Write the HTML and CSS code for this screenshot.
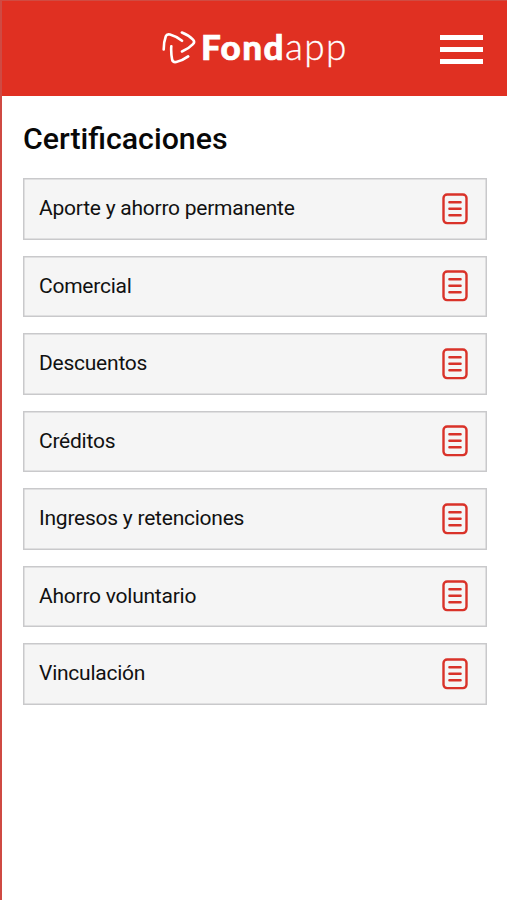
FILE: index.html
```html
<!DOCTYPE html>
<html lang="es">
<head>
<meta charset="utf-8">
<title>Fondapp</title>
<link rel="stylesheet" href="styles.css">
</head>
<body>
<svg class="defs" width="0" height="0" aria-hidden="true">
<symbol id="doc" viewBox="0 0 26 32"><rect x="1.5" y="1.5" width="23" height="28.6" rx="3.6"/><path d="M7.4 9.3h11.2M7.4 15.8h11.2M7.4 22.3h11.2"/></symbol>
</svg>
<div class="screen">
<header class="bar">
<div class="brand">
<svg class="mark" width="36" height="36" viewBox="0 0 36 36"><path d="M2.7 19.5Q2.8 11.5 4.8 6.2Q5.8 3.8 9 4.6Q15 6.2 21 10.8M20.9 2.5Q28 5.4 32 9.6Q34.2 11.9 32 14.1Q27.5 18.8 21 21.5M10.3 16.2Q9.8 23 11.2 29.9Q11.9 32.5 15.2 32Q21.5 30.6 27.2 26.4"/></svg>
<div class="wordmark"><b>Fond</b><span>app</span></div>
</div>
<button class="menu" aria-label="Menú"><i></i><i></i><i></i></button>
</header>
<main>
<h1>Certificaciones</h1>
<ul>
<li><span>Aporte y ahorro permanente</span><svg class="doc"><use href="#doc"/></svg></li>
<li><span>Comercial</span><svg class="doc"><use href="#doc"/></svg></li>
<li><span>Descuentos</span><svg class="doc"><use href="#doc"/></svg></li>
<li><span>Créditos</span><svg class="doc"><use href="#doc"/></svg></li>
<li><span>Ingresos y retenciones</span><svg class="doc"><use href="#doc"/></svg></li>
<li><span>Ahorro voluntario</span><svg class="doc"><use href="#doc"/></svg></li>
<li><span>Vinculación</span><svg class="doc"><use href="#doc"/></svg></li>
</ul>
</main>
</div>
</body>
</html>
```
FILE: styles.css
```css
* { box-sizing: border-box; }
body { margin: 0; background: #fff; font-family: Roboto, sans-serif; color: #111; }
.defs { position: absolute; }
.screen { height: 900px; border-left: 2px solid #cf4a43; overflow: hidden; }
.bar { height: 96px; background: #e03022; border-top: 1px solid #d04b42; display: flex; align-items: center; justify-content: space-between; padding: 0 24px 0 159px; }
.brand { display: flex; align-items: center; margin-top: -2px; }
.mark { fill: none; stroke: #fff; stroke-width: 2.6; stroke-linecap: round; stroke-linejoin: round; }
.wordmark { font: 35px/40px Lato, sans-serif; color: #fff; margin: -4px 0 0 4px; display: flex; align-items: baseline; }
.wordmark b { font-weight: 900; letter-spacing: 1.4px; -webkit-text-stroke: .7px #fff; }
.wordmark span { font-weight: 300; font-size: 37px; letter-spacing: 1.4px; -webkit-text-stroke: .3px #fff; }
.menu { border: 0; padding: 0; background: none; width: 43px; display: flex; flex-direction: column; gap: 7px; margin-top: 1px; }
.menu i { height: 5px; background: #fff; }
main { padding: 23px 20px 0 21px; }
h1 { margin: 0 0 19px; font-size: 30.3px; line-height: 40px; font-weight: 500; color: #080808; }
ul { list-style: none; margin: 0; padding: 0; display: flex; flex-direction: column; gap: 16px; }
li { height: 61.5px; box-shadow: inset 0 0 0 1.5px #c9c9cb; background: #f5f5f5; display: flex; align-items: center; justify-content: space-between; padding: 0 19px 0 16px; font-size: 21px; letter-spacing: -.24px; }
li span { margin-top: -1px; }
.doc { width: 26px; height: 32px; fill: none; stroke: #d93229; stroke-width: 2.4; stroke-linecap: round; }
```
